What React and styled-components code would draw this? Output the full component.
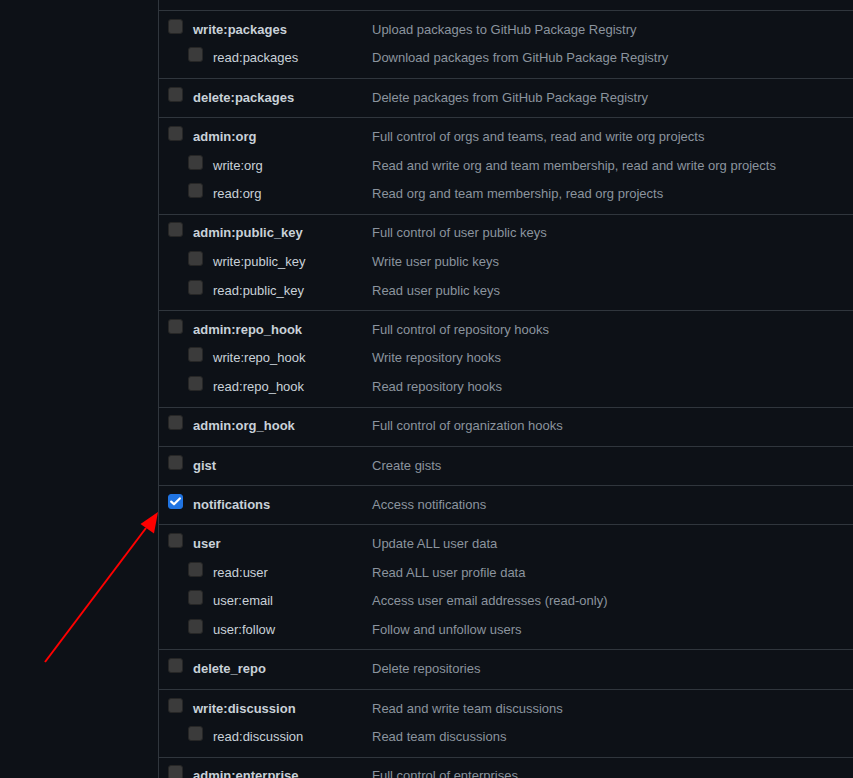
import React from 'react';
import styled, { createGlobalStyle } from 'styled-components';

const GlobalStyle = createGlobalStyle`
    html, body {
        margin: 0;
        padding: 0;
        background-color: #0d1117;
    }
    body {
        font-family: "Liberation Sans", Arial, sans-serif;
        font-size: 13px;
        overflow: hidden;
    }
`;

const Page = styled.div`
    position: relative;
    height: 778px;
    overflow: hidden;
    padding-left: 158px;
`;

const ScopeTable = styled.div`
    border-left: 1px solid #30363d;
    padding-top: 10px;
    min-height: 100%;
`;

const Group = styled.div`
    border-top: 1px solid #30363d;
    padding: 4px 0 5.7px;
`;

const Row = styled.label`
    display: flex;
    align-items: center;
    height: 28.6px;
`;

const NameCell = styled.div`
    display: flex;
    align-items: center;
    width: 213px;
    flex-shrink: 0;
    padding-left: ${({ $sub }) => ($sub ? 29 : 9)}px;
    box-sizing: border-box;
`;

const Box = styled.span`
    width: 15px;
    height: 15px;
    box-sizing: border-box;
    border-radius: 3px;
    margin-right: 10px;
    margin-bottom: 6px;
    flex-shrink: 0;
    display: flex;
    align-items: center;
    justify-content: center;
    background-color: ${({ $checked }) => ($checked ? '#2074e2' : '#3b3b3b')};
    border: 1px solid ${({ $checked }) => ($checked ? '#2074e2' : '#262626')};
`;

const Name = styled.span`
    color: #c9d1d9;
    font-weight: ${({ $sub }) => ($sub ? 400 : 700)};
    white-space: nowrap;
`;

const Description = styled.span`
    color: #8b949e;
    white-space: nowrap;
`;

const ArrowLayer = styled.svg`
    position: absolute;
    left: 0;
    top: 0;
    pointer-events: none;
`;

const groups = [
    [
        ['write:packages', 'Upload packages to GitHub Package Registry'],
        ['read:packages', 'Download packages from GitHub Package Registry'],
    ],
    [['delete:packages', 'Delete packages from GitHub Package Registry']],
    [
        ['admin:org', 'Full control of orgs and teams, read and write org projects'],
        ['write:org', 'Read and write org and team membership, read and write org projects'],
        ['read:org', 'Read org and team membership, read org projects'],
    ],
    [
        ['admin:public_key', 'Full control of user public keys'],
        ['write:public_key', 'Write user public keys'],
        ['read:public_key', 'Read user public keys'],
    ],
    [
        ['admin:repo_hook', 'Full control of repository hooks'],
        ['write:repo_hook', 'Write repository hooks'],
        ['read:repo_hook', 'Read repository hooks'],
    ],
    [['admin:org_hook', 'Full control of organization hooks']],
    [['gist', 'Create gists']],
    [['notifications', 'Access notifications', true]],
    [
        ['user', 'Update ALL user data'],
        ['read:user', 'Read ALL user profile data'],
        ['user:email', 'Access user email addresses (read-only)'],
        ['user:follow', 'Follow and unfollow users'],
    ],
    [['delete_repo', 'Delete repositories']],
    [
        ['write:discussion', 'Read and write team discussions'],
        ['read:discussion', 'Read team discussions'],
    ],
    [['admin:enterprise', 'Full control of enterprises']],
];

const Checkbox = ({ checked }) => (
    <Box $checked={checked}>
        {checked && (
            <svg width="11" height="9" viewBox="0 0 11 9">
                <path d="M1.2 4.6 L4 7.3 L9.8 1.4" fill="none" stroke="#fff" strokeWidth="2.2" strokeLinecap="round" strokeLinejoin="round" />
            </svg>
        )}
    </Box>
);

const App = () => (
    <>
        <GlobalStyle />
        <Page>
            <ScopeTable>
                {groups.map((rows) => (
                    <Group key={rows[0][0]}>
                        {rows.map(([name, desc, checked], i) => (
                            <Row key={name}>
                                <NameCell $sub={i > 0}>
                                    <Checkbox checked={!!checked} />
                                    <Name $sub={i > 0}>{name}</Name>
                                </NameCell>
                                <Description>{desc}</Description>
                            </Row>
                        ))}
                    </Group>
                ))}
            </ScopeTable>
            {/* red annotation arrow pointing at the notifications checkbox */}
            <ArrowLayer width="853" height="778">
                <line x1="45" y1="662" x2="146" y2="528" stroke="#f00" strokeWidth="2" />
                <polygon points="158,512 140.5,524 154,533.5" fill="#f00" />
            </ArrowLayer>
        </Page>
    </>
);

export default App;
